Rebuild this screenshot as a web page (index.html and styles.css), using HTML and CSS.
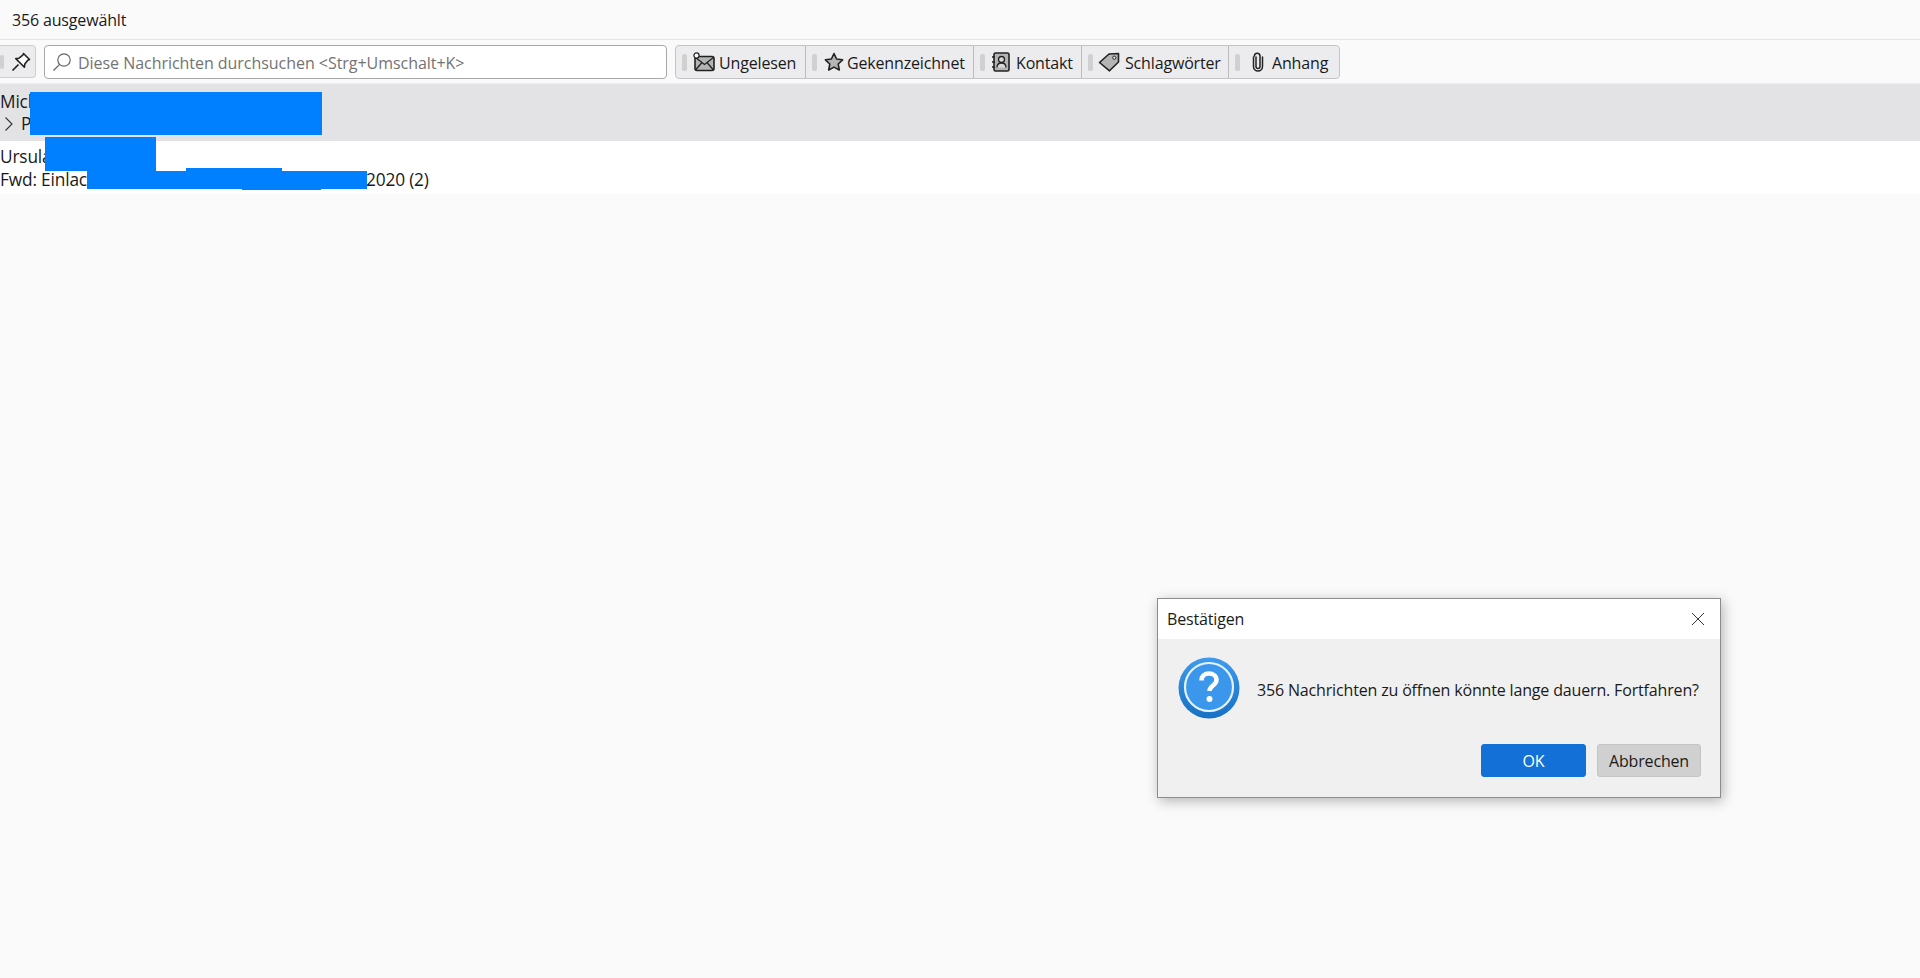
FILE: index.html
```html
<!DOCTYPE html>
<html lang="de">
  <head>
    <meta charset="utf-8">
    <title>356 ausgewählt</title>
    <link rel="stylesheet" href="styles.css">
  </head>
  <body>
    <div class="topbar">356 ausgewählt</div>

    <div class="toolbar">
      <div class="pin">
        <span class="grip grip-pin"></span>
        <svg class="ico" width="20" height="20" viewBox="0 0 20 20"><path d="M12.5 1.500 18.500 7.500 16.800 8.200 13.800 12 13.400 15.200 4.800 6.600 8 6.200 11.800 3.200Z" fill="#fff" stroke="#222" stroke-width="1.600" stroke-linejoin="round"/><path d="M7.500 12.500 1.500 18.500" stroke="#222" stroke-width="1.700"/></svg>
      </div>
      <div class="search">
        <svg class="ico" width="20" height="20" viewBox="0 0 20 20"><circle cx="12" cy="8" r="6.200" fill="none" stroke="#666" stroke-width="1.200"/><path d="M7.600 12.400 1.500 18.500" stroke="#666" stroke-width="1.300"/></svg>
        <span>Diese Nachrichten durchsuchen &lt;Strg+Umschalt+K&gt;</span>
      </div>
      <div class="filters">
        <div class="filter f-unread">
          <span class="grip"></span>
          <svg class="ico" width="22" height="20" viewBox="0 0 22 20"><rect x="2" y="4.500" width="19" height="14" rx="2" fill="#b4b4b4" stroke="#222" stroke-width="1.600"/><path d="M2.500 5.500 11.500 12.500 20.500 5.500M2.500 18 9 10.500M20.500 18 14 10.500" fill="none" stroke="#222" stroke-width="1.300"/><circle cx="3.500" cy="3.500" r="2.600" fill="#fafafa" stroke="#222" stroke-width="1.200"/></svg>
          <span>Ungelesen</span>
        </div>
        <div class="filter f-star">
          <span class="grip"></span>
          <svg class="ico" width="20" height="20" viewBox="0 0 20 20"><path d="M10 1.500 12.600 7 18.600 7.800 14.200 12 15.300 18 10 15.100 4.700 18 5.800 12 1.400 7.800 7.400 7Z" fill="#b4b4b4" stroke="#222" stroke-width="1.600" stroke-linejoin="round"/></svg>
          <span>Gekennzeichnet</span>
        </div>
        <div class="filter f-contact">
          <span class="grip"></span>
          <svg class="ico" width="19" height="20" viewBox="0 0 19 20"><rect x="3" y="1" width="15" height="18" rx="1.500" fill="#b4b4b4" stroke="#222" stroke-width="1.600"/><path d="M1 5h3M1 10h3M1 15h3" stroke="#222" stroke-width="1.500"/><circle cx="10.500" cy="7.500" r="3" fill="#d8d8d8" stroke="#222" stroke-width="1.300"/><path d="M6 15.500c0-3 2-4.500 4.500-4.500s4.500 1.500 4.500 4.500" fill="#d8d8d8" stroke="#222" stroke-width="1.300"/></svg>
          <span>Kontakt</span>
        </div>
        <div class="filter f-tag">
          <span class="grip"></span>
          <svg class="ico" width="22" height="20" viewBox="0 0 22 20"><path d="M1.500 10.500 11 2 20.500 1.500 20.500 10 11.500 18.800Z" fill="#b4b4b4" stroke="#222" stroke-width="1.600" stroke-linejoin="round"/><circle cx="16.300" cy="5.700" r="1.600" fill="#eee" stroke="#222" stroke-width="1"/></svg>
          <span>Schlagwörter</span>
        </div>
        <div class="filter f-attach">
          <span class="grip"></span>
          <svg class="ico" width="12" height="20" viewBox="0 0 12 20"><path d="M4 5v9.500a2 2 0 0 0 4 0V4a2.800 2.800 0 0 0-5.600 0M10.500 5v9.500a4.500 4.500 0 0 1-9 0V5" fill="none" stroke="#222" stroke-width="1.500" stroke-linecap="round"/></svg>
          <span>Anhang</span>
        </div>
      </div>
    </div>

    <div class="list">
      <div class="row row-selected">
        <div class="line">Mich</div>
        <div class="line line-thread">
          <svg width="10" height="16" viewBox="0 0 10 16"><path d="M1.500 1.500 8 8 1.500 14.500" fill="none" stroke="#333" stroke-width="1.100"/></svg>
          <span>P</span>
        </div>
      </div>
      <div class="row">
        <div class="line">Ursula</div>
        <div class="line">Fwd: Einlac<span class="covered"></span>2020 (2)</div>
      </div>
      <div class="redact r1"></div>
      <div class="redact r2"></div>
      <div class="redact r3"></div>
      <div class="redact r4"></div>
      <div class="redact r5"></div>
    </div>

    <div class="dialog">
      <div class="dialog-title">
        <span>Bestätigen</span>
        <svg width="14" height="14" viewBox="0 0 14 14"><path d="M1 1 13 13M13 1 1 13" stroke="#333" stroke-width="1"/></svg>
      </div>
      <div class="dialog-body">
        <div class="dialog-msg">
          <svg width="62" height="62" viewBox="0 0 62 62">
            <defs>
              <linearGradient id="rim" x1="0" y1="0" x2="0" y2="1"><stop offset="0" stop-color="#3f9bee"/><stop offset="1" stop-color="#1670c4"/></linearGradient>
            </defs>
            <circle cx="31" cy="31" r="30.500" fill="url(#rim)"/>
            <circle cx="31" cy="30" r="24" fill="#3b97ec" stroke="#e6f3fd" stroke-width="2.200"/>
            <path d="M23.500 23.500c0-4.500 3.500-7 7.500-7s7.500 2.500 7.500 6.500c0 5.500-7 5.500-7 11" fill="none" stroke="#fff" stroke-width="4.500"/>
            <circle cx="31.500" cy="42" r="3" fill="#fff"/>
          </svg>
          <span>356 Nachrichten zu öffnen könnte lange dauern. Fortfahren?</span>
        </div>
        <div class="dialog-buttons">
          <div class="btn btn-ok">OK</div>
          <div class="btn">Abbrechen</div>
        </div>
      </div>
    </div>
  </body>
</html>
```

FILE: styles.css
```css
html, body {
    margin: 0;
    height: 100%;
}

body {
    background: #fafafa;
    color: #1a1a1a;
    font-family: "Open Sans", sans-serif;
    font-size: 16px;
    letter-spacing: -0.16px;
    overflow: hidden;
}

.topbar {
    height: 39px;
    line-height: 40px;
    padding-left: 12px;
    border-bottom: 1px solid #e4e4e4;
}

.ico {
    flex: none;
}

.grip {
    flex: none;
    width: 5px;
    height: 17px;
    border-radius: 2px;
    background: #d0d0d0;
}

.toolbar {
    display: flex;
    height: 44px;
    padding-top: 5px;
    box-sizing: border-box;
    border-bottom: 1px solid #eee;
}

.pin {
    display: flex;
    align-items: center;
    gap: 7px;
    width: 36px;
    height: 33px;
    box-sizing: border-box;
    background: #ececee;
    border: 1px solid #cfcfcf;
    border-left: 0;
    border-radius: 0 4px 4px 0;
}

.grip-pin {
    width: 4px;
    height: 14px;
}

.search {
    display: flex;
    align-items: center;
    gap: 6px;
    width: 623px;
    height: 34px;
    box-sizing: border-box;
    margin-left: 8px;
    padding-left: 7px;
    background: #fff;
    border: 1px solid #a8a8a8;
    border-radius: 4px;
    color: #737373;
    letter-spacing: -0.04px;
}

.search span,
.filter span:last-child {
    padding-top: 2px;
}

.filters {
    display: flex;
    height: 34px;
    margin-left: 8px;
    box-sizing: border-box;
    background: #ececee;
    border: 1px solid #c4c4c4;
    border-radius: 4px;
}

.filter {
    display: flex;
    align-items: center;
    box-sizing: border-box;
    padding-left: 6px;
    border-right: 1px solid #bcbcbc;
}

.filter:last-child {
    border-right: 0;
}

.f-unread { width: 130px; gap: 5px; }
.f-star { width: 168px; gap: 5px; }
.f-contact { width: 108px; gap: 6px; }
.f-tag { width: 147px; gap: 5px; }
.f-attach { width: 110px; gap: 10px; }

.f-unread .ico { margin-left: 1px; margin-right: -1px; }
.f-star .ico { margin-left: 2px; margin-right: -2px; }
.f-attach .ico { margin-left: 2px; margin-right: -2px; }

.list {
    position: relative;
}

.row {
    height: 53px;
    padding-top: 4px;
    box-sizing: border-box;
    background: #fff;
}

.row-selected {
    height: 57px;
    padding-top: 6px;
    background: #e3e3e5;
}

.line {
    height: 23px;
    line-height: 23px;
    font-size: 17.300px;
    white-space: nowrap;
}

.line-thread {
    display: flex;
    align-items: center;
    gap: 7px;
    padding-left: 4px;
    margin-top: -1px;
}

.covered {
    display: inline-block;
    width: 279px;
}

.redact {
    position: absolute;
    background: #0080ff;
}

.r1 { left: 30px; top: 8px; width: 292px; height: 43px; }
.r2 { left: 45px; top: 53px; width: 111px; height: 34px; }
.r3 { left: 87px; top: 87px; width: 280px; height: 18px; }
.r4 { left: 186px; top: 84px; width: 96px; height: 3px; }
.r5 { left: 242px; top: 105px; width: 79px; height: 1px; }

.dialog {
    position: absolute;
    left: 1157px;
    top: 598px;
    width: 564px;
    height: 200px;
    box-sizing: border-box;
    display: flex;
    flex-direction: column;
    border: 1px solid #8c8c8c;
    background: #f0f0f0;
    box-shadow: 2px 3px 12px rgba(0, 0, 0, 0.28);
}

.dialog-title {
    display: flex;
    align-items: center;
    justify-content: space-between;
    height: 40px;
    padding: 0 15px 0 9px;
    box-sizing: border-box;
    background: #fff;
}

.dialog-body {
    flex: 1;
    padding: 18px 19px 0 20px;
}

.dialog-msg {
    display: flex;
    align-items: center;
    gap: 17px;
    height: 62px;
}

.dialog-msg span {
    padding-top: 4px;
}

.dialog-buttons {
    display: flex;
    justify-content: flex-end;
    gap: 11px;
    margin-top: 25px;
}

.btn {
    width: 104px;
    height: 33px;
    line-height: 33px;
    box-sizing: border-box;
    text-align: center;
    background: #d0d0d0;
    border-radius: 3px;
    border: 1px solid #c4c4c4;
}

.btn-ok {
    width: 105px;
    background: #1270d6;
    border-color: #1270d6;
    color: #fff;
}
```
